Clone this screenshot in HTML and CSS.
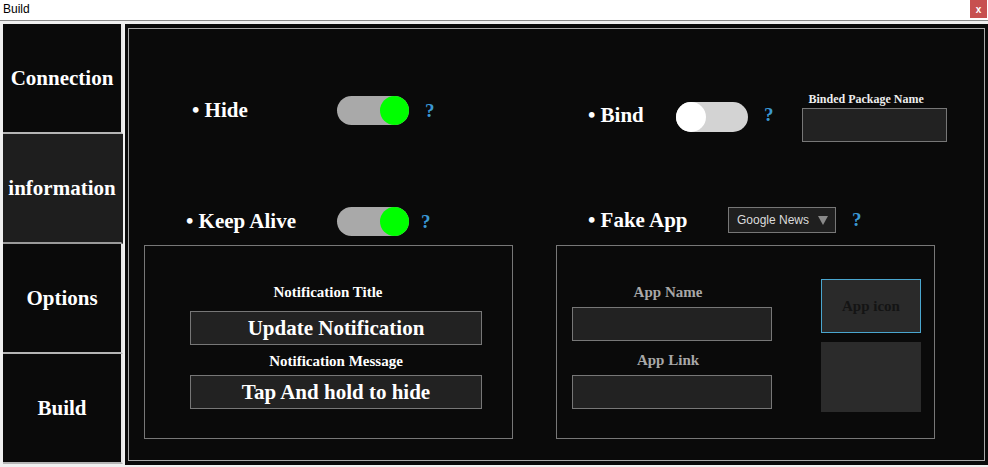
FILE: index.html
```html
<!DOCTYPE html>
<html>
<head>
<meta charset="utf-8">
<title>Build</title>
<link rel="stylesheet" href="styles.css">
</head>
<body>
<div class="titlebar">
  <span class="title">Build</span>
  <span class="close">x</span>
</div>
<div class="app">
  <nav class="nav">
    <div class="nav-btn">Connection</div>
    <div class="nav-btn active">information</div>
    <div class="nav-btn">Options</div>
    <div class="nav-btn">Build</div>
  </nav>
  <main class="panel">
    <div class="panel-inner">
      <section class="col col-left">
        <div class="row row-hide">
          <span class="label label-hide">• Hide</span>
          <span class="toggle on"><span class="knob"></span></span>
          <span class="help">?</span>
        </div>
        <div class="row row-keep">
          <span class="label label-keep">• Keep Alive</span>
          <span class="toggle on"><span class="knob"></span></span>
          <span class="help help-keep">?</span>
        </div>
        <div class="box notif-box">
          <div class="notif-col">
            <div class="small-label title-label">Notification Title</div>
            <div class="field text-field">Update Notification</div>
            <div class="small-label msg-label">Notification Message</div>
            <div class="field text-field msg-field">Tap And hold to hide</div>
          </div>
        </div>
      </section>
      <section class="col col-right">
        <div class="row row-bind">
          <span class="label label-bind">• Bind</span>
          <span class="toggle off"><span class="knob"></span></span>
          <span class="help help-bind">?</span>
          <div class="pkg">
            <div class="pkg-label">Binded Package Name</div>
            <div class="field pkg-field"></div>
          </div>
        </div>
        <div class="row row-fake">
          <span class="label label-fake">• Fake App</span>
          <div class="select"><span>Google News</span><span class="caret"></span></div>
          <span class="help help-fake">?</span>
        </div>
        <div class="box app-box">
          <div class="app-col">
            <div class="gray-label name-label">App Name</div>
            <div class="field app-field"></div>
            <div class="gray-label link-label">App Link</div>
            <div class="field app-field link-field"></div>
          </div>
          <div class="icon-col">
            <div class="icon-btn">App icon</div>
            <div class="icon-preview"></div>
          </div>
        </div>
      </section>
    </div>
  </main>
</div>
</body>
</html>
```
FILE: styles.css
```css
* { box-sizing: border-box; }
html, body {
  margin: 0;
  padding: 0;
}
body {
  width: 988px;
  height: 467px;
  overflow: hidden;
  background: #f0f0f0;
  font-family: "Liberation Serif", serif;
}
.titlebar {
  height: 21px;
  background: #ffffff;
  border-bottom: 1px solid #8a8a8a;
  display: flex;
  justify-content: space-between;
  align-items: flex-start;
}
.title {
  font-family: "Liberation Sans", sans-serif;
  font-size: 12px;
  color: #000;
  margin-left: 3px;
  margin-top: 2px;
}
.close {
  width: 17px;
  height: 18px;
  background: #c75050;
  color: #fff;
  font-family: "Liberation Sans", sans-serif;
  font-size: 10px;
  font-weight: bold;
  display: flex;
  align-items: center;
  justify-content: center;
  margin-right: 1px;
}
.app {
  display: flex;
  padding: 3px 0 0 3px;
  gap: 2px;
}
.nav {
  width: 120px;
  display: flex;
  flex-direction: column;
}
.nav-btn {
  height: 110px;
  background: #0a0a0a;
  color: #fff;
  font-weight: bold;
  font-size: 21px;
  display: flex;
  align-items: center;
  justify-content: center;
  border-right: 2px solid #e6e6e6;
  border-bottom: 2px solid #b5b5b5;
}
.nav-btn.active {
  background: #1e1e1e;
  border-right-color: #1e1e1e;
  border-bottom-color: #9a9a9a;
}
.panel {
  width: 863px;
  height: 441px;
  background: #0a0a0a;
  padding: 4px 3px 4px 3px;
}
.panel-inner {
  height: 100%;
  border: 1px solid #a8a8a8;
  display: flex;
}
.col {
  display: flex;
  flex-direction: column;
}
.col-left { width: 411px; padding-top: 67px; }
.col-right { flex: 1; padding-top: 63px; }
.row {
  display: flex;
  align-items: center;
}
.label {
  color: #fff;
  font-weight: bold;
  font-size: 21px;
  white-space: nowrap;
}
.label-hide { margin-left: 63px; width: 145px; }
.label-keep { margin-left: 57px; width: 151px; }
.label-bind { margin-left: 48px; width: 88px; margin-top: -3px; }
.label-fake { margin-left: 48px; width: 140px; }
.row-keep { margin-top: 82px; }
.toggle {
  width: 72px;
  height: 29px;
  border-radius: 15px;
  display: flex;
  align-items: center;
}
.toggle .knob {
  width: 29px;
  height: 29px;
  border-radius: 50%;
}
.toggle.on { background: #a9a9a9; justify-content: flex-end; }
.toggle.on .knob { background: #00ff00; }
.toggle.off { background: #d3d3d3; height: 30px; justify-content: flex-start; }
.toggle.off .knob { background: #ffffff; width: 30px; height: 30px; }
.help {
  color: #3b98d3;
  font-weight: bold;
  font-size: 19px;
  margin-left: 16px;
}
.help-keep { margin-left: 12px; }
.help-bind { margin-left: 16px; margin-top: -4px; }
.help-fake { margin-left: 16px; }
.pkg {
  margin-left: 28px;
  display: flex;
  flex-direction: column;
}
.pkg-label {
  color: #eee;
  font-weight: bold;
  font-size: 12px;
  line-height: 14px;
  margin-left: 7px;
  margin-bottom: 2px;
}
.field {
  background: #222222;
  border: 1px solid #777777;
}
.pkg-field { width: 145px; height: 34px; }
.row-fake { margin-top: 65px; }
.select {
  width: 108px;
  height: 26px;
  background: #1f1f1f;
  border: 1px solid #777;
  color: #dcdcdc;
  font-family: "Liberation Sans", sans-serif;
  font-size: 12px;
  display: flex;
  align-items: center;
  justify-content: space-between;
  padding: 0 7px 0 8px;
}
.caret {
  width: 0;
  height: 0;
  border-left: 5px solid transparent;
  border-right: 5px solid transparent;
  border-top: 9px solid #8a8a8a;
}
.box {
  border: 1px solid #777777;
  height: 194px;
}
.notif-box {
  margin-top: 9px;
  margin-left: 15px;
  width: 369px;
  padding-top: 37px;
  padding-left: 45px;
}
.notif-col {
  width: 292px;
  display: flex;
  flex-direction: column;
}
.small-label {
  color: #fff;
  font-weight: bold;
  font-size: 15px;
  line-height: 18px;
  text-align: center;
}
.title-label { margin-left: -16px; }
.text-field {
  height: 34px;
  color: #fff;
  font-weight: bold;
  font-size: 21px;
  display: flex;
  align-items: center;
  justify-content: center;
  margin-top: 10px;
}
.msg-label { margin-top: 7px; }
.msg-field { margin-top: 5px; }
.app-box {
  margin-top: 12px;
  margin-left: 16px;
  width: 379px;
  display: flex;
  padding-left: 15px;
}
.app-col {
  width: 200px;
  padding-top: 37px;
  display: flex;
  flex-direction: column;
}
.gray-label {
  color: #a8a8a8;
  font-weight: bold;
  font-size: 15px;
  line-height: 18px;
  text-align: center;
  margin-left: -8px;
}
.app-field { height: 34px; margin-top: 6px; }
.link-label { margin-top: 10px; }
.link-field { margin-top: 6px; }
.icon-col {
  margin-left: 49px;
  width: 100px;
  padding-top: 33px;
  display: flex;
  flex-direction: column;
}
.icon-btn {
  height: 54px;
  background: #2a2a2a;
  border: 1px solid #4aa6cf;
  color: #141414;
  font-weight: bold;
  font-size: 15px;
  display: flex;
  align-items: center;
  justify-content: center;
}
.icon-preview {
  margin-top: 9px;
  height: 70px;
  background: #2b2b2b;
}
```
